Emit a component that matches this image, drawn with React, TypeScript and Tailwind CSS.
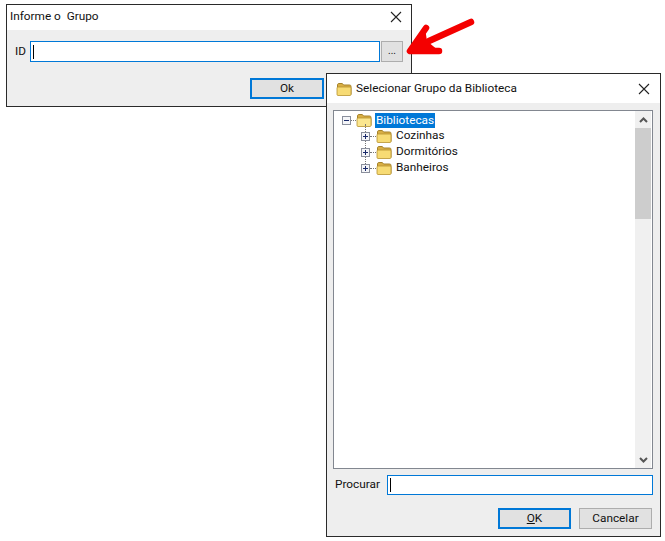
import React from "react";

const uiFont = "font-['Roboto','Open_Sans',sans-serif] text-[11.8px] text-[#111]";

function CloseIcon() {
  return (
    <svg width="12" height="12" viewBox="0 0 12 12" fill="none" stroke="#222" strokeWidth="1.1">
      <path d="M1 1L11 11M11 1L1 11" />
    </svg>
  );
}

function Folder({ open = false }: { open?: boolean }) {
  return (
    <svg width="16" height="14" viewBox="0 0 16 14" className="shrink-0">
      <path d="M1.5 12.5V3C1.5 2 2 1.5 3 1.5H6C7 1.5 7 3 8 3H13.5C14.5 3 15 3.5 15 4.5V12.5Z" fill="#d8ae44" stroke="#a5822a" strokeWidth="1" />
      <path d="M1 6C1 5.4 1.4 5 2 5H14C14.6 5 15 5.4 15 6V12.5C15 13 14.6 13.5 14 13.5H2C1.4 13.5 1 13 1 12.5Z" fill={open ? "#fbe68e" : "#f7db74"} stroke="#b8922e" strokeWidth="0.8" />
    </svg>
  );
}

function Expander({ open = false }: { open?: boolean }) {
  return (
    <span className="relative z-10 flex h-[9px] w-[9px] shrink-0 items-center justify-center border border-[#8a8f9c] bg-[#f4f5f8]">
      <span className="absolute h-px w-[5px] bg-[#1a2a6a]" />
      {!open && <span className="absolute h-[5px] w-px bg-[#1a2a6a]" />}
    </span>
  );
}

function TreeChild({ label }: { label: string }) {
  return (
    <div className="flex h-4 items-center">
      <Expander />
      <span className="w-[6px] border-t border-dotted border-[#777]" />
      <Folder />
      <span className="ml-[4px]">{label}</span>
    </div>
  );
}

function Arrow() {
  return (
    <svg width="74" height="46" viewBox="0 0 74 46" fill="none" className="absolute left-[403px] top-[14px]">
      <path d="M22 14L7 37L36 37L24 27Z" fill="#f40000" />
      <path d="M68 8L26 27" stroke="#f40000" strokeWidth="6.5" strokeLinecap="round" />
      <path d="M23 14L7 37L36 37" stroke="#f40000" strokeWidth="6.5" strokeLinecap="round" strokeLinejoin="round" />
    </svg>
  );
}

export default function App() {
  return (
    <div className={`relative h-[541px] w-[665px] overflow-hidden bg-white ${uiFont}`}>
      {/* first dialog */}
      <div className="absolute left-[6px] top-[4px] flex h-[103px] w-[406px] flex-col border border-[#2a2a2a] bg-[#eeeeee]">
        <div className="flex h-[25px] shrink-0 items-center justify-between bg-white pb-[2px] pl-[3px] pr-[9px]">
          <span className="whitespace-pre">Informe o  Grupo</span>
          <CloseIcon />
        </div>
        <div className="flex flex-col px-[7px] pt-[11px]">
          <div className="flex items-center">
            <span className="w-[16px] pl-px">ID</span>
            <div className="flex h-[21px] w-[350px] items-center border border-[#0078d7] bg-white pl-[2px]">
              <span className="h-[14px] w-px bg-black" />
            </div>
            <button className="ml-px flex h-[21px] w-[22px] items-center justify-center border border-[#adadad] bg-[#e1e1e1] pb-[3px] text-[10px]">
              ...
            </button>
          </div>
          <div className="mt-[16px] pl-[236px]">
            <button className="h-[21px] w-[74px] border-2 border-[#0078d7] bg-[#e1e1e1]">Ok</button>
          </div>
        </div>
      </div>

      <Arrow />

      {/* second dialog */}
      <div className="absolute left-[326px] top-[73px] flex h-[464px] w-[335px] flex-col border border-[#2a2a2a] bg-[#eeeeee]">
        <div className="flex h-[29px] shrink-0 items-center justify-between bg-white pl-[9px] pr-[10px]">
          <div className="flex items-center gap-[4px]">
            <Folder />
            <span>Selecionar Grupo da Biblioteca</span>
          </div>
          <CloseIcon />
        </div>
        <div className="flex flex-1 flex-col px-[6px] pt-[7px]">
          <div className="flex h-[359px] w-[320px] justify-between border border-[#828790] bg-white">
            <div className="relative pl-[8px] pt-px">
              <span className="absolute left-[31px] top-[13px] h-[46px] border-l border-dotted border-[#777]" />
              <div className="flex h-4 items-center">
                <Expander open />
                <span className="w-[5px] border-t border-dotted border-[#777]" />
                <Folder open />
                <span className="ml-[3px] bg-[#0078d7] px-px leading-[15px] text-white">Bibliotecas</span>
              </div>
              <div className="pl-[19px]">
                <TreeChild label="Cozinhas" />
                <TreeChild label="Dormitórios" />
                <TreeChild label="Banheiros" />
              </div>
            </div>
            <div className="mr-px flex w-[16px] flex-col bg-[#f0f0f0]">
              <div className="flex h-[17px] shrink-0 items-center justify-center">
                <svg width="9" height="6" viewBox="0 0 9 6" fill="none" stroke="#555" strokeWidth="2">
                  <path d="M1 5L4.5 1.5L8 5" />
                </svg>
              </div>
              <div className="h-[91px] shrink-0 bg-[#cdcdcd]" />
              <div className="flex-1" />
              <div className="flex h-[17px] shrink-0 items-center justify-center">
                <svg width="9" height="6" viewBox="0 0 9 6" fill="none" stroke="#555" strokeWidth="2">
                  <path d="M1 1L4.5 4.5L8 1" />
                </svg>
              </div>
            </div>
          </div>
          <div className="mt-[6px] flex items-center">
            <span className="w-[54px] pl-[2px]">Procurar</span>
            <div className="flex h-[20px] w-[266px] items-center border border-[#0078d7] bg-white pl-[2px]">
              <span className="h-[14px] w-px bg-black" />
            </div>
          </div>
          <div className="mt-[13px] flex justify-end gap-[8px] pr-[2px]">
            <button className="h-[21px] w-[73px] border-2 border-[#0078d7] bg-[#e1e1e1]">
              <span className="underline">O</span>K
            </button>
            <button className="h-[21px] w-[73px] border border-[#adadad] bg-[#e1e1e1]">Cancelar</button>
          </div>
        </div>
      </div>
    </div>
  );
}
